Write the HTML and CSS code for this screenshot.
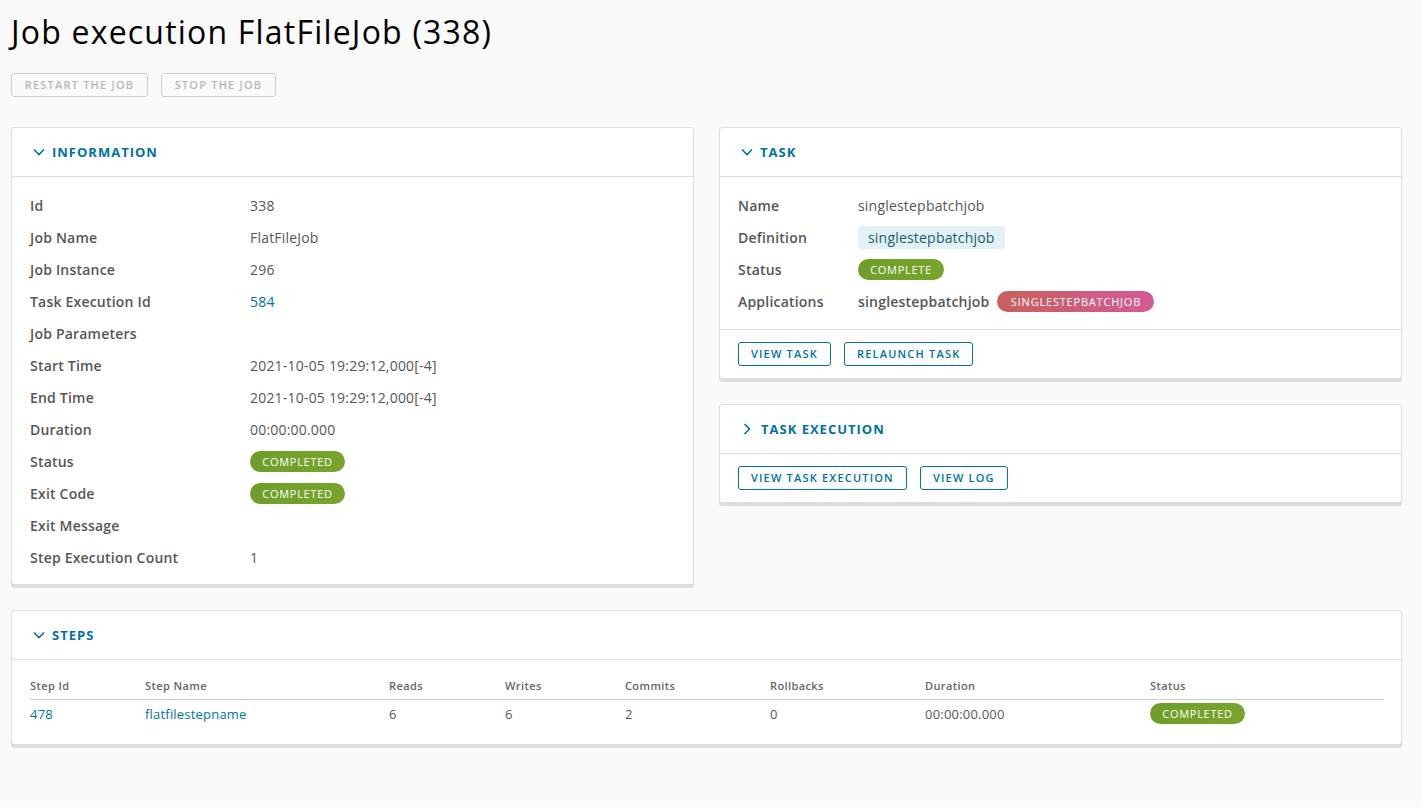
FILE: index.html
```html
<!DOCTYPE html>
<html>
<head>
<meta charset="utf-8">
<link rel="stylesheet" href="styles.css">
</head>
<body>
<div class="page">
  <h1 class="title">Job execution FlatFileJob (338)</h1>
  <div class="actions">
    <button class="btn btn-disabled">RESTART THE JOB</button>
    <button class="btn btn-disabled">STOP THE JOB</button>
  </div>

  <div class="grid">
    <div class="card">
      <div class="card-header">
        <svg class="chev" viewBox="0 0 12 8" width="12" height="8"><path d="M1 1.5 L6 6.5 L11 1.5" fill="none" stroke="#0072a3" stroke-width="1.6"/></svg>
        <span>INFORMATION</span>
      </div>
      <div class="card-body info">
        <div class="row"><div class="lbl">Id</div><div class="val">338</div></div>
        <div class="row"><div class="lbl">Job Name</div><div class="val">FlatFileJob</div></div>
        <div class="row"><div class="lbl">Job Instance</div><div class="val">296</div></div>
        <div class="row"><div class="lbl">Task Execution Id</div><div class="val"><a class="link">584</a></div></div>
        <div class="row"><div class="lbl">Job Parameters</div><div class="val"></div></div>
        <div class="row"><div class="lbl">Start Time</div><div class="val">2021-10-05 19:29:12,000[-4]</div></div>
        <div class="row"><div class="lbl">End Time</div><div class="val">2021-10-05 19:29:12,000[-4]</div></div>
        <div class="row"><div class="lbl">Duration</div><div class="val">00:00:00.000</div></div>
        <div class="row"><div class="lbl">Status</div><div class="val"><span class="badge green w95">COMPLETED</span></div></div>
        <div class="row"><div class="lbl">Exit Code</div><div class="val"><span class="badge green w95">COMPLETED</span></div></div>
        <div class="row"><div class="lbl">Exit Message</div><div class="val"></div></div>
        <div class="row"><div class="lbl">Step Execution Count</div><div class="val">1</div></div>
      </div>
    </div>

    <div class="col">
      <div class="card">
        <div class="card-header">
          <svg class="chev" viewBox="0 0 12 8" width="12" height="8"><path d="M1 1.5 L6 6.5 L11 1.5" fill="none" stroke="#0072a3" stroke-width="1.6"/></svg>
          <span>TASK</span>
        </div>
        <div class="card-body task">
          <div class="row"><div class="lbl">Name</div><div class="val">singlestepbatchjob</div></div>
          <div class="row"><div class="lbl">Definition</div><div class="val"><span class="tag">singlestepbatchjob</span></div></div>
          <div class="row"><div class="lbl">Status</div><div class="val"><span class="badge green w86">COMPLETE</span></div></div>
          <div class="row"><div class="lbl">Applications</div><div class="val"><b class="app">singlestepbatchjob</b><span class="badge red">SINGLESTEPBATCHJOB</span></div></div>
        </div>
        <div class="card-footer">
          <button class="btn btn-outline">VIEW TASK</button>
          <button class="btn btn-outline">RELAUNCH TASK</button>
        </div>
      </div>

      <div class="card">
        <div class="card-header right">
          <svg class="chev" viewBox="0 0 8 12" width="8" height="12"><path d="M1.5 1 L6.5 6 L1.5 11" fill="none" stroke="#0072a3" stroke-width="1.6"/></svg>
          <span>TASK EXECUTION</span>
        </div>
        <div class="card-footer">
          <button class="btn btn-outline">VIEW TASK EXECUTION</button>
          <button class="btn btn-outline">VIEW LOG</button>
        </div>
      </div>
    </div>
  </div>

  <div class="card steps">
    <div class="card-header">
      <svg class="chev" viewBox="0 0 12 8" width="12" height="8"><path d="M1 1.5 L6 6.5 L11 1.5" fill="none" stroke="#0072a3" stroke-width="1.6"/></svg>
      <span>STEPS</span>
    </div>
    <div class="card-body table-body">
      <table class="tbl">
        <thead>
          <tr>
            <th class="c1">Step Id</th>
            <th class="c2">Step Name</th>
            <th class="c3">Reads</th>
            <th class="c4">Writes</th>
            <th class="c5">Commits</th>
            <th class="c6">Rollbacks</th>
            <th class="c7">Duration</th>
            <th class="c8">Status</th>
          </tr>
        </thead>
        <tbody>
          <tr>
            <td><a class="link">478</a></td>
            <td><a class="link">flatfilestepname</a></td>
            <td>6</td>
            <td>6</td>
            <td>2</td>
            <td>0</td>
            <td>00:00:00.000</td>
            <td><span class="badge green w95">COMPLETED</span></td>
          </tr>
        </tbody>
      </table>
    </div>
  </div>
</div>
</body>
</html>
```

FILE: styles.css
```css
* { box-sizing: border-box; }
html, body { margin: 0; padding: 0; }
body {
  background: #fafafa;
  font-family: "Open Sans", "Liberation Sans", sans-serif;
  color: #565656;
  font-size: 14px;
  letter-spacing: 0.2px;
}
.page {
  padding: 0 19px 40px 11px;
}
.title {
  margin: 0;
  padding-top: 12px;
  height: 73px;
  font-weight: 400;
  font-size: 32px;
  line-height: 40px;
  letter-spacing: 1.2px;
  color: #000;
}
.actions {
  display: flex;
  gap: 13px;
  height: 24px;
}
.btn {
  height: 24px;
  padding: 0 12px;
  font-family: inherit;
  font-size: 11px;
  font-weight: 600;
  letter-spacing: 1.2px;
  border-radius: 3px;
  background: transparent;
  line-height: 22px;
  cursor: pointer;
  white-space: nowrap;
}
.btn-disabled {
  border: 1px solid #cccccc;
  color: #b8b8b8;
}
.actions .btn:first-child { width: 137px; }
.actions .btn:last-child { width: 115px; }
.btn-outline {
  border: 1px solid #0072a3;
  color: #0072a3;
}
.grid {
  margin-top: 30px;
  display: grid;
  grid-template-columns: 1fr 1fr;
  column-gap: 25px;
  align-items: start;
}
.col {
  display: flex;
  flex-direction: column;
  gap: 25px;
}
.card {
  background: #fff;
  border: 1px solid #dddddd;
  border-radius: 3px;
  box-shadow: 0 3px 0 0 #dddddd;
}
.card-header {
  height: 49px;
  border-bottom: 1px solid #dddddd;
  display: flex;
  align-items: center;
  padding-left: 21px;
  gap: 7px;
  color: #0072a3;
  font-weight: 700;
  font-size: 13px;
  letter-spacing: 1px;
}
.card-header.right { padding-left: 23px; gap: 10px; }
.chev { display: block; flex: none; }
.card-body {
  padding: 12px 18px 11px 18px;
}
.row {
  display: flex;
  height: 32px;
  align-items: center;
}
.lbl {
  font-weight: 600;
  color: #565656;
  flex: none;
}
.info .lbl { width: 220px; }
.task .lbl { width: 120px; }
.task { padding-bottom: 12px; border-bottom: 1px solid #dddddd; }
.val {
  display: flex;
  align-items: center;
  gap: 8px;
}
.link { color: #0072a3; text-decoration: none; }
.badge {
  display: inline-flex;
  align-items: center;
  justify-content: center;
  height: 21px;
  border-radius: 11px;
  color: #fff;
  font-size: 11px;
  font-weight: 400;
  letter-spacing: 0.7px;
  padding: 0 6px;
}
.green { background: linear-gradient(90deg, #6e9e2a, #78a42c); }
.red { background: linear-gradient(90deg, #c9605a, #d35a98); width: 157px; letter-spacing: 0.8px; }
.w95 { width: 95px; }
.w86 { width: 86px; }
.tag {
  display: inline-flex;
  align-items: center;
  height: 23px;
  padding: 0 10px;
  border-radius: 3px;
  background: #e1f1f6;
  color: #1b5a7a;
}
.app { font-weight: 600; color: #565656; }
.card-footer {
  height: 48px;
  display: flex;
  align-items: center;
  gap: 13px;
  padding-left: 18px;
}
.steps { margin-top: 25px; }
.table-body { padding: 13px 17px 16px 18px; }
.tbl {
  width: 100%;
  border-collapse: collapse;
}
.tbl th {
  text-align: left;
  font-size: 11px;
  font-weight: 600;
  color: #666;
  height: 26px;
  vertical-align: middle;
  border-bottom: 1px solid #cccccc;
  padding: 0;
  letter-spacing: 0.4px;
}
.tbl td {
  padding: 0;
  height: 29px;
  vertical-align: middle;
  font-size: 13px;
}
.c1 { width: 115px; }
.c2 { width: 244px; }
.c3 { width: 116px; }
.c4 { width: 120px; }
.c5 { width: 145px; }
.c6 { width: 155px; }
.c7 { width: 225px; }
```
